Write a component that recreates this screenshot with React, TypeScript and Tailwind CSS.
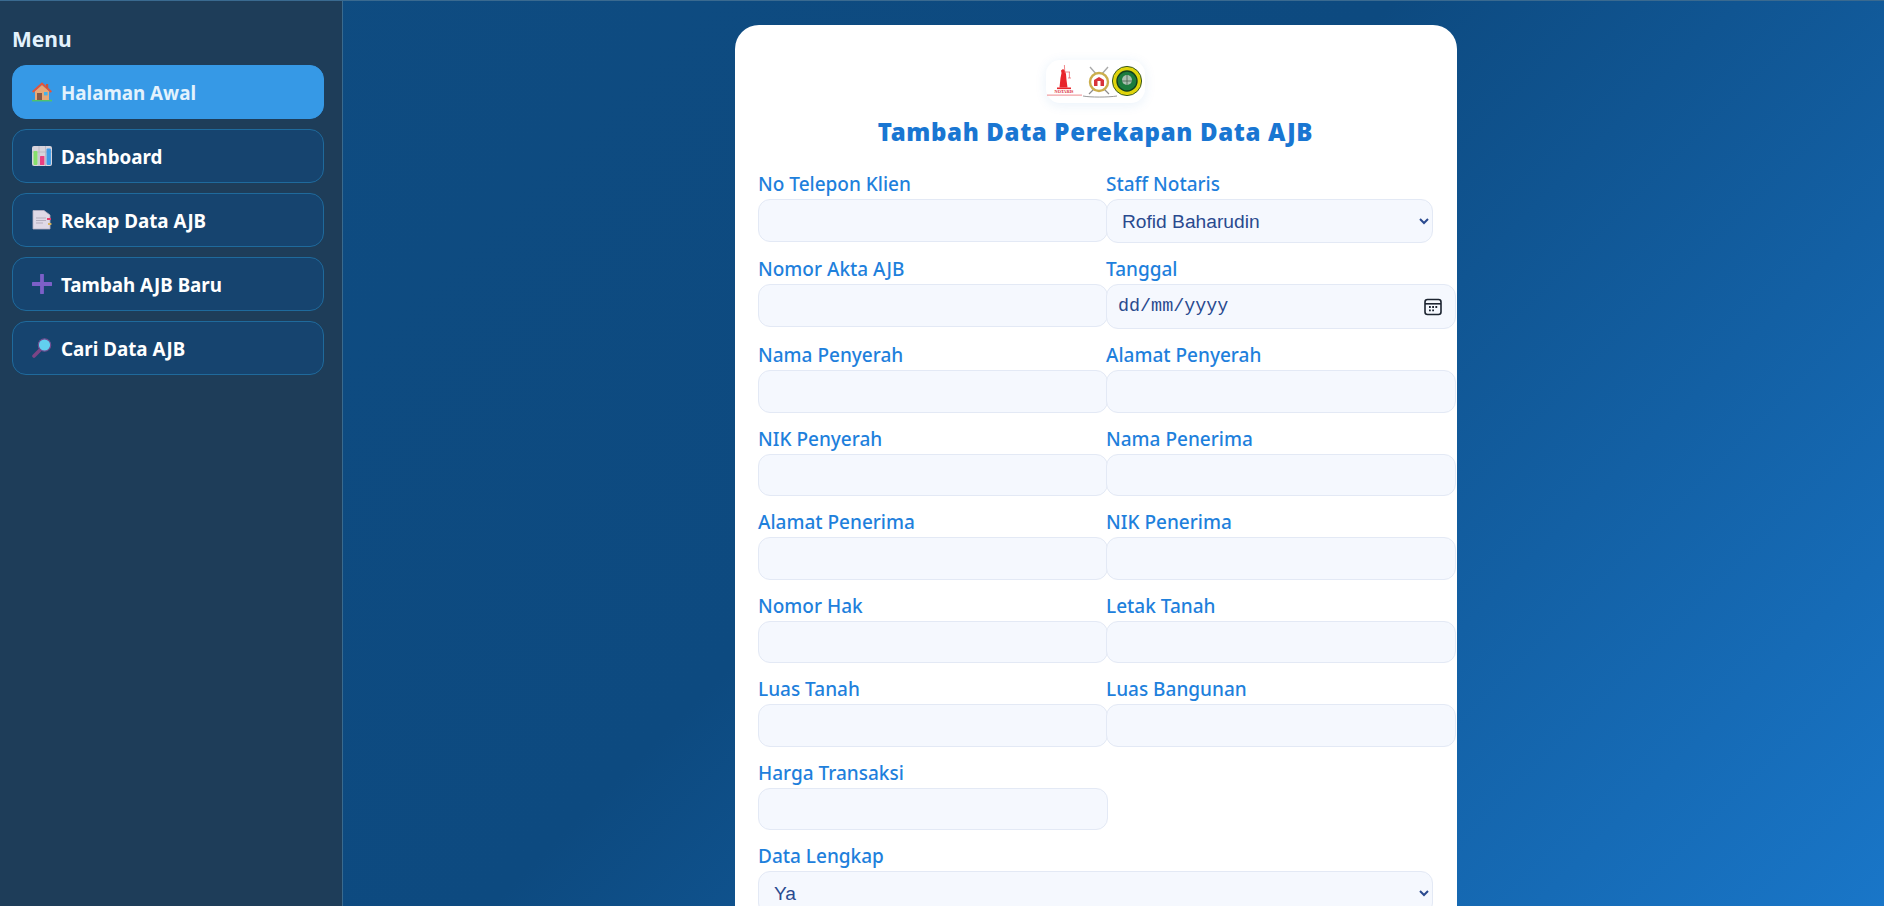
import React from "react";

const font = "font-['Noto_Sans','Open_Sans',sans-serif]";

function HomeIcon() {
  return (
    <svg width="20" height="20" viewBox="0 0 20 20" className="shrink-0">
      <rect x="0" y="17.8" width="20" height="1.6" fill="#4fc36b" />
      <path d="M3 9 L10 3 L17 9 V18 H3 Z" fill="#e8a878" />
      <rect x="5" y="11" width="5" height="7" fill="#8a5a48" />
      <rect x="12" y="10" width="3.6" height="3.4" fill="#45b4ea" />
      <path d="M0.6 10 L10 1.6 L19.4 10" fill="none" stroke="#e5533a" strokeWidth="2" />
      <rect x="14" y="2" width="2.2" height="4" fill="#c9563e" />
    </svg>
  );
}
function ChartIcon() {
  return (
    <svg width="20" height="20" viewBox="0 0 20 20" className="shrink-0">
      <rect x="0" y="0" width="20" height="20" rx="2" fill="#d8d4dc" />
      <path d="M0 6H20M7 0V20M13.5 0V20" stroke="#b9b4c0" strokeWidth="0.8" />
      <rect x="1.5" y="5" width="4" height="14" rx="1" fill="#86e06c" />
      <rect x="8" y="10" width="4.4" height="9" rx="0.6" fill="#ea3f82" />
      <rect x="14.5" y="2.5" width="4.4" height="16.5" rx="1" fill="#3d9ce8" />
    </svg>
  );
}
function NoteIcon() {
  return (
    <svg width="20" height="20" viewBox="0 0 20 20" className="shrink-0">
      <path d="M1 0.5 H12 L18 5 V19 H1 Z" fill="#e0d9e6" stroke="#b8b0c2" strokeWidth="0.8" />
      <path d="M4 8H14M4 10.5H14M4 13H11" stroke="#b5aebd" strokeWidth="1" />
      <rect x="15" y="8" width="4" height="2" fill="#e63f6f" />
      <rect x="16" y="13" width="3.4" height="2" fill="#d9b35c" />
    </svg>
  );
}
function PlusIcon() {
  return (
    <svg width="20" height="20" viewBox="0 0 20 20" className="shrink-0">
      <path d="M10 1 V19 M1 10 H19" stroke="#7c60c8" strokeWidth="3.8" strokeLinecap="round" />
    </svg>
  );
}
function SearchIcon() {
  return (
    <svg width="20" height="20" viewBox="0 0 20 20" className="shrink-0">
      <path d="M8 12 L2 18" stroke="#7b4586" strokeWidth="3.6" strokeLinecap="round" />
      <circle cx="12.5" cy="7" r="6.2" fill="#62d0ef" stroke="#6f4a8e" strokeWidth="1.2" />
    </svg>
  );
}

function Logos() {
  return (
    <svg width="99" height="43" viewBox="0 0 99 43">
      <path d="M13.5 27.5 L14.5 18 L15.5 13 L15 10.5 L17 9 L18.8 10.5 L20 14 L20.5 20 L21.5 27.5 Z" fill="#e8252b" />
      <path d="M18.4 5 L18.8 13 M19 12 H24 M23.4 12 V18 M22 18 H25" stroke="#e8585c" strokeWidth="0.7" fill="none" />
      <rect x="11" y="27.5" width="14" height="1.6" fill="#e8252b" />
      <text x="18" y="33.4" textAnchor="middle" fontSize="4.2" fontWeight="700" fill="#d9252b" fontFamily="Liberation Serif">NOTARIS</text>
      <rect x="1" y="34.6" width="35" height="1" fill="#ee8a8d" />
      <path d="M44 7 L51 15 M62 7 L55 15" stroke="#a9a9a9" strokeWidth="1.4" />
      <path d="M43 34 L48 29 M63 34 L58 29" stroke="#8c8c8c" strokeWidth="1.2" />
      <path d="M37 36 C44 37.4 62 37.4 71 36" stroke="#9a9a9a" strokeWidth="1" fill="none" />
      <circle cx="53" cy="22" r="9" fill="#fff" stroke="#cbae4c" strokeWidth="2.4" />
      <path d="M48 26 V20 L53 17 L58 20 V26 Z" fill="#d8333a" />
      <rect x="51.5" y="21" width="3" height="5" fill="#fff" />
      <circle cx="81" cy="21" r="14.6" fill="#e0d40c" stroke="#3a5a20" strokeWidth="1" />
      <circle cx="81" cy="21" r="10" fill="#1c7c3e" stroke="#11401f" strokeWidth="1.4" />
      <circle cx="81" cy="20" r="5" fill="#a9c0b0" />
      <path d="M76 21 H86 M81 15 V25" stroke="#46614f" strokeWidth="0.8" />
    </svg>
  );
}

function Label({ children }: { children: React.ReactNode }) {
  return <label className="block h-[26px] text-[19px] leading-[23px] font-medium text-[#1e80dc]">{children}</label>;
}

function Field({ label, wide }: { label: string; wide?: boolean }) {
  return (
    <div className="flex flex-col min-w-0">
      <Label>{label}</Label>
      <input type="text" className={`${wide ? "w-[350px]" : "w-[350px]"} h-[42.5px] mb-[15px] rounded-[12px] border border-[#e3e9f5] bg-[#f5f8fe] outline-none`} />
    </div>
  );
}

function SelectField({ label, value }: { label: string; value: string }) {
  return (
    <div className="flex flex-col min-w-0">
      <Label>{label}</Label>
      <select defaultValue={value} className="w-full h-[44px] mb-[15px] pl-[11px] pr-[10px] rounded-[12px] border border-[#e3e9f5] bg-[#f5f8fe] text-[#2a4a8f] text-[19.2px] font-['Liberation_Sans',sans-serif] outline-none">
        <option>{value}</option>
      </select>
    </div>
  );
}

const nav = [
  { t: "Halaman Awal", i: <HomeIcon />, active: true },
  { t: "Dashboard", i: <ChartIcon /> },
  { t: "Rekap Data AJB", i: <NoteIcon /> },
  { t: "Tambah AJB Baru", i: <PlusIcon /> },
  { t: "Cari Data AJB", i: <SearchIcon /> },
];

export default function App() {
  return (
    <div className={`${font} flex h-screen w-full overflow-hidden border-t border-[#3a6a90] bg-[linear-gradient(135deg,#0f4c81_0%,#0d4a80_50%,#1976c8_100%)]`}>
      <aside className="w-[343px] shrink-0 h-full bg-[#1e3d59] border-r border-[#3a6a8e] pt-[24px] pl-[12px] pr-[18px]">
        <h2 className="text-[21px] leading-[28px] font-bold text-[#e3f2fd] mb-[12px]">Menu</h2>
        <nav className="flex flex-col gap-[10px]">
          {nav.map((n) => (
            <a
              key={n.t}
              className={`flex items-center gap-[9px] h-[54px] pl-[19px] rounded-[14px] border text-[18.8px] font-bold ${n.active ? "bg-[#3699e6] border-[#3699e6] text-[#e3f2fd]" : "bg-[#16446f] border-[#1f6a9c] text-white"}`}
            >
              {n.i}
              <span className="pt-[3px]">{n.t}</span>
            </a>
          ))}
        </nav>
      </aside>
      <main className="flex-1 min-w-0 flex items-start">
        <div className="w-[722px] shrink-0 ml-[392px] mt-[24px] bg-white rounded-[24px] pl-[23px] pr-[24px] pt-[35px] pb-[40px]">
          <div className="flex justify-center">
            <div className="w-[99px] h-[43px] rounded-[14px] bg-white shadow-[0_2px_12px_rgba(25,118,210,0.10)] flex items-center justify-center">
              <Logos />
            </div>
          </div>
          <h1 className="mt-[12px] mb-[24px] text-center text-[24px] leading-[33px] pb-[1px] font-black text-[#1976d2] tracking-[0.65px]">Tambah Data Perekapan Data AJB</h1>
          <div className="grid grid-cols-[348px_1fr]">
            <Field label="No Telepon Klien" />
            <SelectField label="Staff Notaris" value="Rofid Baharudin" />
            <Field label="Nomor Akta AJB" />
            <div className="flex flex-col min-w-0">
              <Label>Tanggal</Label>
              <div className="w-[350px] h-[45px] mb-[15px] pl-[11px] pr-[13px] flex items-center justify-between rounded-[12px] border border-[#e3e9f5] bg-[#f5f8fe] text-[#2a4a8f] text-[18.4px] font-['Liberation_Mono',monospace]">
                <span>dd/mm/yyyy</span>
                <svg width="18" height="18" viewBox="0 0 18 18" fill="none">
                  <rect x="1" y="1.5" width="16" height="15" rx="2.5" stroke="#1c2430" strokeWidth="1.6" />
                  <path d="M1 5.8 H17" stroke="#1c2430" strokeWidth="1.6" />
                  <path d="M5 9H6.8M8.2 9H10M11.4 9H13.2M5 12.4H6.8M8.2 12.4H10" stroke="#1c2430" strokeWidth="1.8" />
                </svg>
              </div>
            </div>
            <Field label="Nama Penyerah" />
            <Field label="Alamat Penyerah" wide />
            <Field label="NIK Penyerah" />
            <Field label="Nama Penerima" wide />
            <Field label="Alamat Penerima" />
            <Field label="NIK Penerima" wide />
            <Field label="Nomor Hak" />
            <Field label="Letak Tanah" wide />
            <Field label="Luas Tanah" />
            <Field label="Luas Bangunan" wide />
            <Field label="Harga Transaksi" />
            <div />
            <div className="col-span-2">
              <SelectField label="Data Lengkap" value="Ya" />
            </div>
          </div>
        </div>
      </main>
    </div>
  );
}
